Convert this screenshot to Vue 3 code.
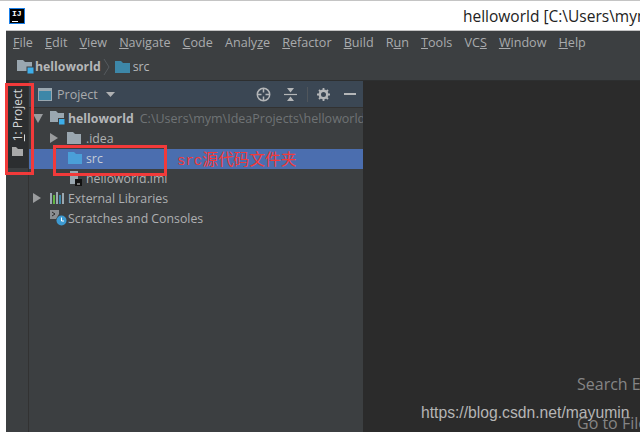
<script setup>
const menus = [
  { pre: '', u: 'F', post: 'ile' },
  { pre: '', u: 'E', post: 'dit' },
  { pre: '', u: 'V', post: 'iew' },
  { pre: '', u: 'N', post: 'avigate' },
  { pre: '', u: 'C', post: 'ode' },
  { pre: 'Analy', u: 'z', post: 'e' },
  { pre: '', u: 'R', post: 'efactor' },
  { pre: '', u: 'B', post: 'uild' },
  { pre: 'R', u: 'u', post: 'n' },
  { pre: '', u: 'T', post: 'ools' },
  { pre: 'VC', u: 'S', post: '' },
  { pre: '', u: 'W', post: 'indow' },
  { pre: '', u: 'H', post: 'elp' }
]
</script>

<template>
  <div class="screen">
    <header class="titlebar">
      <div class="logo"><span class="logo-text">IJ</span><i class="logo-bar"></i></div>
      <div class="title">helloworld [C:\Users\mym\IdeaProjects\helloworld]</div>
    </header>
    <div class="window">
      <nav class="menubar">
        <span v-for="m in menus" :key="m.u + m.post" class="menu">{{ m.pre }}<u>{{ m.u }}</u>{{ m.post }}</span>
      </nav>
      <div class="crumbs">
        <svg class="crumb-ico" width="18" height="18" viewBox="0 0 18 18">
          <path d="M0 2h6l2 2h7v9H0z" fill="#9aa7b0" />
          <rect x="10" y="9" width="7" height="7" fill="#3daee9" stroke="#3c3f41" stroke-width="1" />
        </svg>
        <b class="crumb-main">helloworld</b>
        <svg class="crumb-sep" width="8" height="18" viewBox="0 0 8 18"><path d="M1 1l5 8-5 8" fill="none" stroke="#555a5e" /></svg>
        <svg class="crumb-ico2" width="15" height="12" viewBox="0 0 15 12"><path d="M0 0h6l2 2h7v10H0z" fill="#3d87a8" /></svg>
        <span class="crumb-src">src</span>
      </div>
      <div class="body">
        <aside class="strip">
          <div class="strip-tab">
            <span class="strip-label"><u>1</u>: Project</span>
            <svg width="11" height="9" viewBox="0 0 11 9"><path d="M0 0h4l2 2h5v7H0z" fill="#a9a9a9" /></svg>
          </div>
        </aside>
        <section class="panel">
          <div class="panel-head">
            <svg class="view-ico" width="14" height="13" viewBox="0 0 14 13">
              <rect x=".5" y=".5" width="13" height="12" fill="#3d87a8" stroke="#9aa7b0" />
              <rect x=".5" y=".5" width="13" height="2.5" fill="#9aa7b0" />
            </svg>
            <span class="head-title">Project</span>
            <svg class="caret" width="9" height="5" viewBox="0 0 9 5"><path d="M0 0h9L4.500 5z" fill="#afb1b3" /></svg>
            <div class="head-tools">
              <svg width="15" height="15" viewBox="0 0 15 15">
                <circle cx="7.500" cy="7.500" r="6.200" fill="none" stroke="#b4b6b8" stroke-width="1.500" />
                <path d="M7.500 1v4.500M7.500 9.500v4.500M1 7.500h4.500M9.500 7.500h4.500" stroke="#b4b6b8" stroke-width="1.500" />
              </svg>
              <svg class="t-collapse" width="13" height="13" viewBox="0 0 13 13">
                <path d="M0 6.500h13" stroke="#b4b6b8" stroke-width="1.200" />
                <path d="M3 0h7L6.500 4.500zM3 13h7L6.500 8.500z" fill="#b4b6b8" />
              </svg>
              <i class="t-sep"></i>
              <svg class="t-gear" width="13" height="13" viewBox="0 0 13 13">
                <circle cx="6.500" cy="6.500" r="3.700" fill="none" stroke="#b4b6b8" stroke-width="2.400" />
                <path d="M6.500 0v3M6.500 10v3M0 6.500h3M10 6.500h3M2 2l2 2M9 9l2 2M11 2L9 4M4 9l-2 2" stroke="#b4b6b8" stroke-width="1.800" />
              </svg>
              <i class="t-min"></i>
            </div>
          </div>
          <div class="tree">
            <div class="row">
              <svg class="arrow a0" width="10" height="9" viewBox="0 0 10 9"><path d="M0 0h10L5 9z" fill="#9a9c9e" /></svg>
              <svg class="ico i1" width="16" height="16" viewBox="0 0 16 16">
                <path d="M0 1h6l2 2h6v9H0z" fill="#9aa7b0" />
                <rect x="8.500" y="8.500" width="6.500" height="6.500" fill="#3daee9" stroke="#3c3f41" />
              </svg>
              <b class="root">helloworld</b>
              <span class="path">C:\Users\mym\IdeaProjects\helloworld</span>
            </div>
            <div class="row">
              <svg class="arrow a1" width="8" height="10" viewBox="0 0 8 10"><path d="M0 0l8 5-8 5z" fill="#9a9c9e" /></svg>
              <svg class="ico i2" width="14" height="12" viewBox="0 0 14 12"><path d="M0 0h6l2 2h6v10H0z" fill="#9aa7b0" /></svg>
              <span>.idea</span>
            </div>
            <div class="row selected">
              <svg class="ico i3" width="14" height="12" viewBox="0 0 14 12"><path d="M0 0h6l2 2h6v10H0z" fill="#4a9fd8" /></svg>
              <span>src</span>
            </div>
            <div class="row">
              <svg class="ico i4" width="12" height="15" viewBox="0 0 12 15">
                <path d="M0 0h8v8H0z" fill="#9aa7b0" />
                <path d="M0 8h5v5H0z" fill="#9aa7b0" />
                <rect x="5" y="8" width="7" height="7" fill="#111" />
                <rect x="7" y="12.500" width="3" height="1" fill="#ddd" />
              </svg>
              <span>helloworld.iml</span>
            </div>
            <div class="row">
              <svg class="arrow a2" width="8" height="10" viewBox="0 0 8 10"><path d="M0 0l8 5-8 5z" fill="#9a9c9e" /></svg>
              <svg class="ico i5" width="14" height="12" viewBox="0 0 14 12">
                <rect x="0" y="1" width="2" height="11" fill="#9aa7b0" />
                <rect x="3" y="3" width="2" height="9" fill="#62b543" />
                <rect x="6" y="0" width="2" height="12" fill="#9aa7b0" />
                <rect x="9" y="3" width="2" height="9" fill="#3d87a8" />
                <rect x="12" y="1" width="2" height="11" fill="#9aa7b0" />
              </svg>
              <span>External Libraries</span>
            </div>
            <div class="row">
              <svg class="ico i6" width="17" height="16" viewBox="0 0 17 16">
                <path d="M0 0h9v4L6 9H0z" fill="#8b8f92" />
                <path d="M2 2l3 2-3 2" fill="none" stroke="#2b2b2b" />
                <circle cx="11.500" cy="10.500" r="5" fill="#3d9ad1" />
                <path d="M11.500 7.500v3.500h2.500" fill="none" stroke="#fff" />
              </svg>
              <span>Scratches and Consoles</span>
            </div>
          </div>
        </section>
        <main class="editor">
          <div class="hint h1">Search Everywhere</div>
          <div class="hint h2">Go to File</div>
        </main>
      </div>
    </div>
    <div class="mark m-strip"></div>
    <div class="mark m-src"></div>
    <div class="note"><span class="note-latin">src</span>源代码文件夹</div>
    <div class="watermark">https://blog.csdn.net/mayumin</div>
  </div>
</template>

<style>
html, body { margin: 0; background: #fff; overflow: hidden; }
</style>

<style scoped>
.screen {
  position: relative;
  width: 640px;
  height: 432px;
  overflow: hidden;
  background: #fff;
  border-top: 1px solid #c4c4c4;
  box-sizing: border-box;
  font-family: "Open Sans", "Noto Sans", sans-serif;
}
.titlebar {
  height: 29px;
  display: flex;
  align-items: center;
  position: relative;
}
.logo {
  width: 14px;
  height: 14px;
  margin-left: 9px;
  background: #000;
  border: 1px solid #1a7fe8;
  position: relative;
  flex: none;
}
.logo-text {
  position: absolute;
  left: 2px;
  top: 0;
  color: #fff;
  font: bold 8px/9px "Liberation Mono", monospace;
}
.logo-bar {
  position: absolute;
  left: 2px;
  bottom: 1px;
  width: 6px;
  height: 1px;
  background: #fff;
}
.title {
  margin-left: 438px;
  white-space: nowrap;
  font-size: 15.500px;
  color: #222;
  font-family: "Open Sans", sans-serif;
}
.window {
  margin-left: 6px;
  height: 402px;
  background: #3c3f41;
  border-top: 1px solid #c4c4c4;
  display: flex;
  flex-direction: column;
}
.menubar {
  height: 22px;
  display: flex;
  align-items: center;
  gap: 12.100px;
  padding-left: 7px;
  font-size: 12.600px;
  color: #a9abad;
  white-space: nowrap;
}
.crumbs {
  height: 27px;
  display: flex;
  align-items: center;
  padding-left: 11px;
  border-bottom: 1px solid #2d2f30;
  color: #b5b7b9;
  font-size: 12.300px;
}
.crumb-ico { flex: none; }
.crumb-main { font-weight: 700; }
.crumb-sep { margin: 0 4px 0 2px; flex: none; }
.crumb-ico2 { margin-right: 3px; flex: none; }
.body {
  flex: 1;
  display: flex;
  min-height: 0;
}
.strip {
  width: 23px;
  background: #3c3f41;
  border-right: 1px solid #323232;
  box-sizing: border-box;
  flex: none;
}
.strip-tab {
  height: 87px;
  background: #2c2e30;
  display: flex;
  flex-direction: column;
  align-items: center;
  gap: 6px;
  padding-top: 8px;
  box-sizing: border-box;
}
.strip-label {
  writing-mode: vertical-rl;
  transform: rotate(180deg);
  font-size: 12px;
  color: #d4d6d8;
  white-space: nowrap;
}
.panel {
  width: 334px;
  background: #3c3f41;
  flex: none;
  display: flex;
  flex-direction: column;
}
.panel-head {
  height: 26px;
  background: #3b4754;
  border-bottom: 1px solid #323232;
  display: flex;
  align-items: center;
  padding-left: 9px;
  flex: none;
  color: #a9abad;
  font-size: 12.500px;
}
.head-title { margin-left: 5px; }
.caret { margin-left: 8px; }
.head-tools {
  margin-left: auto;
  display: flex;
  align-items: center;
  padding-right: 7px;
}
.t-collapse { margin-left: 13px; }
.t-sep {
  width: 1px;
  height: 15px;
  background: #50565c;
  margin: 0 9px 0 10px;
}
.t-min {
  width: 12px;
  height: 2px;
  background: #b4b6b8;
  margin-left: 14px;
}
.tree {
  padding-top: 1px;
  font-size: 12.300px;
  color: #a9b7c6;
}
.row {
  height: 20px;
  box-sizing: border-box;
  padding-bottom: 2px;
  display: flex;
  align-items: center;
  white-space: nowrap;
  overflow: hidden;
  color: #aeb0b2;
}
.row.selected {
  background: #4b6eaf;
  color: #c6cdd8;
}
.arrow, .ico { flex: none; }
.a0 { margin-left: 4px; }
.i1 { margin-left: 7px; margin-right: 2px; }
.root { font-weight: 700; color: #b5b7b9; }
.path { margin-left: 6px; color: #6f7375; font-size: 12.500px; }
.a1 { margin-left: 21px; }
.i2 { margin-left: 9px; margin-right: 5px; }
.i3 { margin-left: 39px; margin-right: 4px; }
.i4 { margin-left: 41px; margin-right: 4px; }
.a2 { margin-left: 4px; }
.i5 { margin-left: 9px; margin-right: 4px; }
.i6 { margin-left: 21px; margin-right: 1px; }
.editor {
  flex: 1;
  background: #2b2b2b;
  position: relative;
  min-width: 0;
  overflow: hidden;
}
.hint {
  position: absolute;
  left: 214px;
  white-space: nowrap;
  font-size: 16px;
  color: #858585;
}
.h1 { top: 292px; }
.h2 { top: 331px; }
.mark {
  position: absolute;
  border: 3px solid #f23a3a;
  box-sizing: border-box;
}
.m-strip { left: 5px; top: 82px; width: 29px; height: 92px; }
.m-src { left: 53px; top: 144px; width: 114px; height: 31px; }
.note {
  position: absolute;
  left: 177px;
  top: 148px;
  font-family: "Noto Sans CJK SC", sans-serif;
  font-size: 15.700px;
  line-height: 20px;
  color: #f23a3a;
  white-space: nowrap;
}
.note-latin {
  font-family: "Liberation Mono", monospace;
  font-size: 14px;
}
.watermark {
  position: absolute;
  left: 421px;
  top: 402px;
  font-family: "Liberation Sans", Arial, sans-serif;
  font-size: 15.700px;
  line-height: 20px;
  color: #b5b5b5;
  white-space: nowrap;
}
</style>
